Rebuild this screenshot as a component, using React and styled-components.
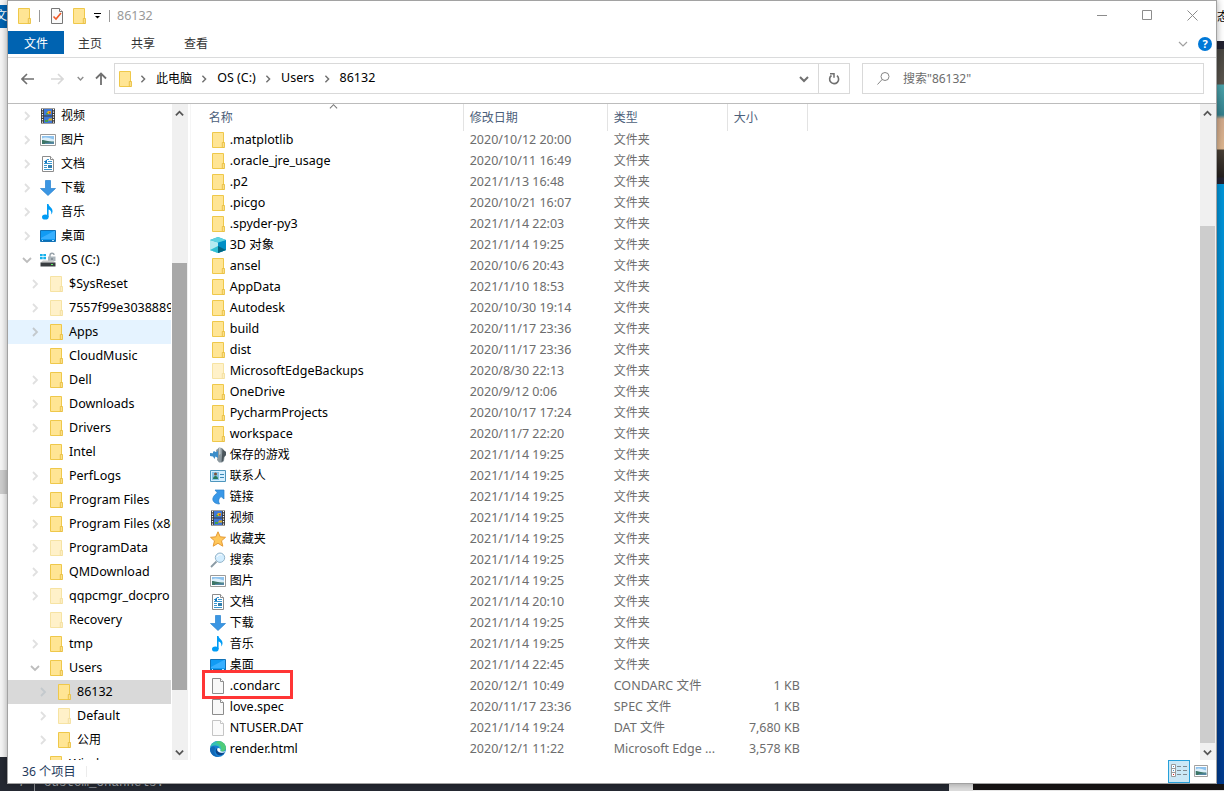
import React from "react";
import styled, { createGlobalStyle, css } from "styled-components";

const tree = [
    { name: "视频", icon: "video", level: 0, arrow: "right" },
    { name: "图片", icon: "picture", level: 0, arrow: "right" },
    { name: "文档", icon: "document", level: 0, arrow: "right" },
    { name: "下载", icon: "download", level: 0, arrow: "right" },
    { name: "音乐", icon: "music", level: 0, arrow: "right" },
    { name: "桌面", icon: "desktop", level: 0, arrow: "right" },
    { name: "OS (C:)", icon: "drive", level: 0, arrow: "down" },
    { name: "$SysReset", icon: "faded", level: 1, arrow: "right" },
    { name: "7557f99e3038889", icon: "faded", level: 1, arrow: "right" },
    { name: "Apps", icon: "folder", level: 1, arrow: "right", state: "hover" },
    { name: "CloudMusic", icon: "folder", level: 1 },
    { name: "Dell", icon: "folder", level: 1, arrow: "right" },
    { name: "Downloads", icon: "folder", level: 1, arrow: "right" },
    { name: "Drivers", icon: "folder", level: 1, arrow: "right" },
    { name: "Intel", icon: "folder", level: 1 },
    { name: "PerfLogs", icon: "folder", level: 1, arrow: "right" },
    { name: "Program Files", icon: "folder", level: 1, arrow: "right" },
    { name: "Program Files (x86)", icon: "folder", level: 1, arrow: "right" },
    { name: "ProgramData", icon: "faded", level: 1, arrow: "right" },
    { name: "QMDownload", icon: "folder", level: 1, arrow: "right" },
    { name: "qqpcmgr_docpro", icon: "faded", level: 1, arrow: "right" },
    { name: "Recovery", icon: "faded", level: 1 },
    { name: "tmp", icon: "folder", level: 1, arrow: "right" },
    { name: "Users", icon: "folder", level: 1, arrow: "down" },
    { name: "86132", icon: "folder", level: 2, arrow: "right", state: "selected" },
    { name: "Default", icon: "faded", level: 2, arrow: "right" },
    { name: "公用", icon: "folder", level: 2, arrow: "right" },
    { name: "Windows", icon: "folder", level: 1 },
];

const files = [
    [".matplotlib", "folder", "2020/10/12 20:00"],
    [".oracle_jre_usage", "folder", "2020/10/11 16:49"],
    [".p2", "folder", "2021/1/13 16:48"],
    [".picgo", "folder", "2020/10/21 16:07"],
    [".spyder-py3", "folder", "2021/1/14 22:03"],
    ["3D 对象", "cube", "2021/1/14 19:25"],
    ["ansel", "folder", "2020/10/6 20:43"],
    ["AppData", "folder", "2021/1/10 18:53"],
    ["Autodesk", "folder", "2020/10/30 19:14"],
    ["build", "folder", "2020/11/17 23:36"],
    ["dist", "folder", "2020/11/17 23:36"],
    ["MicrosoftEdgeBackups", "faded", "2020/8/30 22:13"],
    ["OneDrive", "folder", "2020/9/12 0:06"],
    ["PycharmProjects", "folder", "2020/10/17 17:24"],
    ["workspace", "folder", "2020/11/7 22:20"],
    ["保存的游戏", "games", "2021/1/14 19:25"],
    ["联系人", "contacts", "2021/1/14 19:25"],
    ["链接", "link", "2021/1/14 19:25"],
    ["视频", "video", "2021/1/14 19:25"],
    ["收藏夹", "star", "2021/1/14 19:25"],
    ["搜索", "search", "2021/1/14 19:25"],
    ["图片", "picture", "2021/1/14 19:25"],
    ["文档", "document", "2021/1/14 20:10"],
    ["下载", "download", "2021/1/14 19:25"],
    ["音乐", "music", "2021/1/14 19:25"],
    ["桌面", "desktop", "2021/1/14 22:45"],
    [".condarc", "file", "2020/12/1 10:49", "CONDARC 文件", "1 KB"],
    ["love.spec", "file", "2020/11/17 23:36", "SPEC 文件", "1 KB"],
    ["NTUSER.DAT", "fadedFile", "2021/1/14 19:24", "DAT 文件", "7,680 KB"],
    ["render.html", "edge", "2020/12/1 11:22", "Microsoft Edge ...", "3,578 KB"],
];

const FolderShape = () => (
    <>
        <path d="M2.5 .5h11v10h.7v5H2.5z" fill="#ffe594" stroke="#efc84a" />
        <path d="M12.300 15.500V10.500h2v5z" fill="#ffe79a" stroke="#e8bd3f" strokeWidth=".9" />
    </>
);

const FileShape = () => (
    <>
        <path d="M2.5.5h8l3 3v12h-11z" fill="#f8f8f8" stroke="#8c8c8c" />
        <path d="M10.5.5v3h3" fill="#fff" stroke="#8c8c8c" />
    </>
);

const shapes = {
    folder: <FolderShape />,
    faded: <g opacity=".5"><FolderShape /></g>,
    file: <FileShape />,
    fadedFile: <g opacity=".5"><FileShape /></g>,
    video: (
        <>
            <path d="M1 .5h14v15H1z" fill="#3b3b3b" />
            <path d="M4 1h8v6.5H4z" fill="#3f78d8" />
            <path d="M4 8.5h8V15H4z" fill="#3f78d8" />
            <path d="M8 3h3v3H6z M9 10.5h3v2H8z" fill="#e0b020" />
            <path d="M6 5h2v1.500H6z M5 12h3v2H5z" fill="#46a04b" />
            <path d="M9 4h1.500v1.500H9z" fill="#c94030" />
            <path d="M2.500 1v14M13.500 1v14" stroke="#fff" strokeWidth="1.200" strokeDasharray="1.200 1.300" />
        </>
    ),
    picture: (
        <>
            <path d="M.5 2.500h15v11H.5z" fill="#fff" stroke="#9a9a9a" />
            <path d="M2 4h12v8H2z" fill="#8fc3ee" />
            <path d="M2 6.500c3-2 6-1 12 1V10H2z" fill="#dceffa" />
            <path d="M2 8c3 0 5 1.500 12 1.500V12H2z" fill="#3d7668" />
            <path d="M5 11l9-1v2H5z" fill="#5588a4" />
        </>
    ),
    document: (
        <>
            <path d="M2.500.5h8l3 3v12h-11z" fill="#fff" stroke="#8c8c8c" />
            <path d="M10.500.5v3h3" fill="#fff" stroke="#8c8c8c" />
            <path d="M7 3.500h2M4 5.500h2M8 5.500h4M4 7.500h8M4 9.500h3M4 11.500h3M4 13.500h8" stroke="#3c97cf" />
            <path d="M5 5l2-1.500V7H5z" fill="#1679bc" />
            <path d="M8 9h4v3H8z" fill="#337fae" />
        </>
    ),
    download: <path d="M5.500.5h5v8h5L8 15.500.5 8.500h5z" fill="#3b96e3" stroke="#2682d0" strokeWidth=".7" />,
    music: (
        <>
            <ellipse cx="5.300" cy="13" rx="3.300" ry="2.600" fill="#009cf5" />
            <path d="M7 0h1.500c.3 3 4 3.500 4 7 0 1.500-.5 2.500-1.200 3.500.5-3-1-4.500-2.700-5V13H7z" fill="#009cf5" />
        </>
    ),
    desktop: (
        <>
            <path d="M.5 2.500h15v11H.5z" fill="#109bf4" stroke="#1272b6" />
            <path d="M1 10L14 3h1v8H1z" fill="#38b0ff" />
            <path d="M1 12.500h14" stroke="#0870b8" />
            <path d="M2 12.500h1M12 12.500h2" stroke="#b8e3ff" />
        </>
    ),
    drive: (
        <>
            <path d="M0 2h2.700v2.200H0zM3.300 2H6v2.200H3.300zM0 5h2.700v2.200H0zM3.300 5H6v2.200H3.300z" fill="#16b1ec" />
            <path d="M10 5V3.500c0-3 4-3 4-.5" fill="none" stroke="#9aa4ab" strokeWidth="1.400" />
            <path d="M8 4.500h7.500V9H8z" fill="#aab4bb" />
            <path d="M11.500 6h1v2h-1z" fill="#647078" />
            <path d="M3 8.500h10l2.500 2H.5z" fill="#c9c9c9" />
            <path d="M.5 10.500h15v4H.5z" fill="#393d40" />
            <path d="M11 12h2v1h-2z" fill="#5df260" />
        </>
    ),
    cube: (
        <>
            <path d="M0 3l8-3 8 3v10l-8 3-8-3z" fill="#1fb2d2" />
            <path d="M0 3l8 2.500V16l-8-3z" fill="#b4eaf0" />
            <path d="M8 5.500L16 3v10l-8 3z" fill="#008fc5" />
            <path d="M0 3l8-3 8 3-8 2.500z" fill="#5ed2e1" />
            <path d="M0 13l8-4v7z" fill="#31bfd3" />
            <path d="M8 9l8 4-8 3z" fill="#036581" />
        </>
    ),
    games: (
        <>
            <path d="M6 3l1.500-1L9 .5l3 .5 1.500 2L16 5v3l-1.500 2-.5 4-2 1.500h-3L7 13l.5-3z" fill="#8b989f" />
            <path d="M12.500 1.500L14 3.500 16 5v3l-2 2-1 4-1.500 1z" fill="#4b565c" />
            <path d="M9 1h1.500v6L9 8z" fill="#c2c9cd" />
            <path d="M0 6l3 .3V5l1-1 1.500 1L8 4v7l-2.500-1.500L4.500 12 3 9.500 0 9z" fill="#3c8dc9" />
        </>
    ),
    contacts: (
        <>
            <path d="M.5 2.500h15v11H.5z" fill="#d5efff" stroke="#4e96bd" />
            <path d="M2 4h7v8H2z" fill="#86c3e7" />
            <circle cx="5.500" cy="6" r="1.500" fill="#7c5036" />
            <path d="M3 11c0-4 5-4 5 0z" fill="#26785a" />
            <path d="M10 6.500h4M10 9.500h4" stroke="#3b89b7" />
        </>
    ),
    link: <path d="M5 1h9v9l-3-2.500C8.500 9.500 8 12 9.500 15 5 15 2 12 3 9c.6-2.200 2-3.500 4.500-5z" fill="#3998e8" stroke="#2680ca" strokeWidth=".7" />,
    star: <path d="M8 .8l2.200 5 5.300.5-4 3.500 1.300 5.400L8 12.300l-4.800 2.900 1.300-5.400-4-3.500 5.300-.5z" fill="#ffc75a" stroke="#e59a35" />,
    search: (
        <>
            <path d="M1 15l5.500-5.500" stroke="#8b9aa4" strokeWidth="1.800" />
            <circle cx="10" cy="5.700" r="4.700" fill="#d2edff" stroke="#93b4c9" />
            <path d="M7 5c.5-2 3-3 5-2" stroke="#fff" fill="none" />
        </>
    ),
    edge: (
        <>
            <circle cx="8" cy="8" r="8" fill="#1680d4" />
            <path d="M.3 6C2-1.500 14-2 15.700 6c.8 4-4 5.500-6.500 4 2.500-5-4-7-8.900-4z" fill="#35c1b4" />
            <path d="M8 0c5 0 8 3.500 8 7 0 3-3 4-5 3.600 1-2 1-7-5-9z" fill="#5bd05e" opacity=".7" />
            <path d="M5.500 7C3 10 5 15.500 9.500 15.900 4 16.500 0 13 0 8c1-3 4-3.500 5.500-1z" fill="#1268b5" />
            <path d="M7.500 7c-1.500 3 2.500 6.500 7 4.500-2 4-8 3.500-8.800-.8C5.400 9 6.200 7.500 7.500 7z" fill="#0b4489" />
            <path d="M7.800 7c-1.800 2.300.8 4.900 4.300 4.700 2.200-.1 3.200-.8 3.700-1.500-2.500.8-5.100.6-5.600-.4.800-1 0-2.900-2.400-2.800z" fill="#fff" />
        </>
    ),
};

const Icon = ({ name }) => (
    <Glyph width="16" height="16" viewBox="0 0 16 16">{shapes[name]}</Glyph>
);

const turns = { right: "M2 0l4 4-4 4", down: "M0 2l4 4 4-4", up: "M0 6l4-4 4 4" };

const Chevron = ({ dir, color, size = 8, weight = 1.5 }) => (
    <Glyph width={size} height={size} viewBox="-1 -1 10 10">
        <path d={turns[dir]} fill="none" stroke={color} strokeWidth={weight} />
    </Glyph>
);

const Label = ({ children }) => (
    <Text $cjk={/^[\u4e00-\u9fff]+$/.test(children)}>{children}</Text>
);

const TitleBar = () => (
    <Title>
        <Icon name="folder" />
        <Divider $left={7} $right={9} />
        <Glyph width="16" height="16" viewBox="0 0 16 16">
            <path d="M2.500.5h8l3 3v12h-11z" fill="#fafafa" stroke="#777" />
            <path d="M10.500.5v3h3" fill="#fff" stroke="#777" />
            <path d="M4.500 8.500l2.500 2.500 5-6" fill="none" stroke="#f05a28" strokeWidth="1.600" />
        </Glyph>
        <QuickFolder><Icon name="folder" /></QuickFolder>
        <Glyph width="8" height="6" viewBox="0 0 8 6">
            <path d="M0 .5h7" stroke="#000" />
            <path d="M1 3h5L3.500 5.500z" fill="#000" />
        </Glyph>
        <Divider $left={7} $right={7} />
        <Label>86132</Label>
        <Controls>
            <Glyph width="11" height="11" viewBox="0 0 11 11"><path d="M0 5.500h10" stroke="#8c8c8c" /></Glyph>
            <Glyph width="11" height="11" viewBox="0 0 11 11"><path d="M.5.5h9v9h-9z" fill="none" stroke="#8c8c8c" /></Glyph>
            <Glyph width="11" height="11" viewBox="0 0 11 11"><path d="M.5.5l10 10M10.500.5l-10 10" stroke="#8c8c8c" /></Glyph>
        </Controls>
    </Title>
);

const Ribbon = () => (
    <Tabs>
        <FileTab>文件</FileTab>
        <Tab>主页</Tab>
        <Tab>共享</Tab>
        <Tab>查看</Tab>
        <RibbonEnd>
            <Chevron dir="down" color="#a0a0a0" size={10} weight={1.2} />
            <Help>?</Help>
        </RibbonEnd>
    </Tabs>
);

const Navigation = () => (
    <NavBar>
        <NavButtons>
            <Glyph width="13" height="12" viewBox="0 0 13 12">
                <path d="M6 1L1 6l5 5M1 6h12" fill="none" stroke="#707070" strokeWidth="1.600" />
            </Glyph>
            <Glyph width="13" height="12" viewBox="0 0 13 12">
                <path d="M7 1l5 5-5 5M12 6H0" fill="none" stroke="#d8d8d8" strokeWidth="1.600" />
            </Glyph>
            <Chevron dir="down" color="#8c8c8c" size={7} weight={2} />
            <Glyph width="12" height="13" viewBox="0 0 12 13">
                <path d="M1 6.500l5-5 5 5M6 1.500V13" fill="none" stroke="#707070" strokeWidth="1.800" />
            </Glyph>
        </NavButtons>
        <AddressBox>
            <Icon name="folder" />
            {["此电脑", "OS (C:)", "Users", "86132"].map((crumb) => (
                <Crumb key={crumb}>
                    <Chevron dir="right" color="#707070" size={8} weight={1.8} />
                    <Label>{crumb}</Label>
                </Crumb>
            ))}
            <AddressEnd>
                <Chevron dir="down" color="#707070" size={10} weight={2} />
            </AddressEnd>
            <Refresh>
                <Glyph width="12" height="12" viewBox="0 0 12 12">
                    <path d="M9 2.700A4.500 4.500 0 1 1 3.500 2.500" fill="none" stroke="#707070" strokeWidth="1.600" />
                    <path d="M2 .8h4v4" fill="none" stroke="#707070" strokeWidth="1.500" />
                </Glyph>
            </Refresh>
        </AddressBox>
        <SearchBox>
            <Glyph width="13" height="13" viewBox="0 0 13 13">
                <circle cx="8" cy="4.500" r="4" fill="none" stroke="#858585" />
                <path d="M5.200 7.400L.5 12.500" stroke="#858585" />
            </Glyph>
            <Label>搜索"86132"</Label>
        </SearchBox>
    </NavBar>
);

const Scrollbar = ({ before, thumb, color }) => (
    <Track>
        <ScrollArrow><Chevron dir="up" color="#555" size={9} weight={2} /></ScrollArrow>
        <Thumb $before={before} $height={thumb} $color={color} />
        <ScrollArrow $end><Chevron dir="down" color="#555" size={9} weight={2} /></ScrollArrow>
    </Track>
);

const App = () => {
    return (
        <Desktop>
            <GlobalStyle />
            <LeftEdge>
                <EdgeTab>文</EdgeTab>
                <EdgeThumb />
                <EdgeDark />
            </LeftEdge>
            <Window>
                <TitleBar />
                <Ribbon />
                <Navigation />
                <Content>
                    <TreePane>
                        {tree.map((item) => (
                            <TreeRow key={item.name} $level={item.level} $state={item.state}>
                                <ArrowSlot>
                                    {item.arrow && (
                                        <Chevron
                                            dir={item.arrow}
                                            color={item.arrow === "down" ? "#bdbdbd" : item.state ? "#c3c9cd" : "#e0e0e0"}
                                            size={10}
                                            weight={1.8}
                                        />
                                    )}
                                </ArrowSlot>
                                <Icon name={item.icon} />
                                <Label>{item.name}</Label>
                            </TreeRow>
                        ))}
                    </TreePane>
                    <Scrollbar before={143} thumb={427} color="#a8a8a8" />
                    <FilePane>
                        <Columns as="header">
                            <HeadCell>
                                名称
                                <SortMark><Chevron dir="up" color="#777" size={9} weight={1.2} /></SortMark>
                            </HeadCell>
                            <HeadCell>修改日期</HeadCell>
                            <HeadCell>类型</HeadCell>
                            <HeadCell>大小</HeadCell>
                        </Columns>
                        {files.map(([name, icon, date, type = "文件夹", size]) => (
                            <FileRow key={name}>
                                <NameCell>
                                    <Icon name={icon} />
                                    <Label>{name}</Label>
                                </NameCell>
                                <Cell><Label>{date}</Label></Cell>
                                <Cell><Label>{type}</Label></Cell>
                                <Cell $right>{size && <Label>{size}</Label>}</Cell>
                                {name === ".condarc" && <Highlight />}
                            </FileRow>
                        ))}
                    </FilePane>
                    <Scrollbar before={106} thumb={517} color="#cdcdcd" />
                </Content>
                <StatusBar>
                    <Label>36 个项目</Label>
                    <StatusLine />
                    <ViewButtons>
                        <DetailsView>
                            <Glyph width="17" height="14" viewBox="0 0 17 14">
                                <path d="M.5.5h4v12h-4zM.5 4.500h4M.5 8.500h4" fill="#fff" stroke="#999" />
                                <path d="M6 2.500h4M12 2.500h4M6 6.500h4M12 6.500h4M6 10.500h4M12 10.500h4" stroke="#808a90" />
                                <path d="M2 2h1v1H2zM2 6h1v1H2z" fill="#4b94c6" />
                                <path d="M2 10h1v1H2z" fill="#d22" />
                            </Glyph>
                        </DetailsView>
                        <Glyph width="14" height="12" viewBox="0 2 16 12" preserveAspectRatio="none">{shapes.picture}</Glyph>
                    </ViewButtons>
                </StatusBar>
            </Window>
            <RightEdge>
                <EdgePaper>态</EdgePaper>
                <EdgePhoto />
            </RightEdge>
            <BottomEdge>
                <Editor><Gutter>7</Gutter><Code>custom_channels:</Code></Editor>
                <Gap />
                <Black />
            </BottomEdge>
        </Desktop>
    );
};

export default App;

const GlobalStyle = createGlobalStyle`
    * {
        box-sizing: border-box;
    }

    body {
        margin: 0;
        overflow: hidden;
    }
`;

const Desktop = styled.div`
    display: grid;
    grid-template-columns: 7px 1210px 7px;
    grid-template-rows: 784px 7px;
    width: 1224px;
    height: 791px;
    overflow: hidden;
    font-family: "Noto Sans", "Noto Sans CJK SC", sans-serif;
    font-size: 12px;
    color: #000;
`;

const Glyph = styled.svg`
    display: block;
    flex: none;
`;

const Text = styled.span`
    font-size: ${({ $cjk }) => ($cjk ? "12px" : "12.5px")};
    white-space: nowrap;
`;

const Window = styled.main`
    display: flex;
    flex-direction: column;
    position: relative;
    z-index: 1;
    background: #fff;
    border: 1px solid #a2a2a2;
    box-shadow: 0 0 7px rgba(0, 0, 0, 0.35);
`;

const Title = styled.div`
    display: flex;
    align-items: center;
    height: 30px;
    padding: 0 0 1px 8px;
    color: #999;
`;

const Divider = styled.div`
    width: 1px;
    height: 12px;
    margin: 0 ${({ $right }) => $right}px 0 ${({ $left }) => $left}px;
    background: #999;
`;

const QuickFolder = styled.div`
    margin: 0 7px 0 6px;
`;

const Controls = styled.div`
    display: flex;
    gap: 34px;
    margin-left: auto;
    padding-right: 18px;
`;

const Tabs = styled.nav`
    display: flex;
    height: 27px;
    border-bottom: 1px solid #dadbdc;
`;

const Tab = styled.div`
    width: 53px;
    height: 23px;
    padding-right: 1px;
    line-height: 25px;
    text-align: center;
    color: #333;
`;

const FileTab = styled(Tab)`
    width: 56px;
    padding-right: 0;
    background: #0063b1;
    color: #fff;
`;

const RibbonEnd = styled.div`
    display: flex;
    align-items: center;
    gap: 10px;
    margin-left: auto;
    padding-right: 4px;
`;

const Help = styled.div`
    width: 14px;
    height: 14px;
    border-radius: 50%;
    background: #0078d7;
    color: #fff;
    font-size: 11px;
    font-weight: 700;
    line-height: 14px;
    text-align: center;
`;

const NavBar = styled.div`
    display: flex;
    height: 46px;
    padding: 5px 12px 10px 13px;
    border-bottom: 1px solid #bcbcbc;
`;

const NavButtons = styled.div`
    display: flex;
    align-items: center;
    width: 93px;
    padding-top: 1px;

    svg:nth-child(2) {
        margin: 0 13px 0 17px;
    }

    svg:nth-child(4) {
        margin-left: 11px;
    }
`;

const AddressBox = styled.div`
    display: flex;
    align-items: center;
    width: 736px;
    height: 31px;
    padding-left: 2px;
    border: 1px solid #d9d9d9;
`;

const Crumb = styled.div`
    display: flex;
    align-items: center;
    gap: 9px;
    margin-right: 8.2px;

    svg + & {
        margin-left: 6px;
    }

    ${Text} {
        padding-bottom: 2px;
    }
`;

const AddressEnd = styled.div`
    margin-left: auto;
    padding-right: 9px;
`;

const Refresh = styled.div`
    display: flex;
    align-items: center;
    justify-content: center;
    width: 31px;
    height: 29px;
    border-left: 1px solid #d9d9d9;
`;

const SearchBox = styled.div`
    display: flex;
    align-items: center;
    gap: 13px;
    width: 342px;
    height: 31px;
    margin-left: 12px;
    padding: 0 0 1px 14px;
    border: 1px solid #d9d9d9;
    color: #6d6d6d;

    ${Text} {
        font-size: 12px;
    }
`;

const Content = styled.div`
    display: flex;
    height: 656px;
`;

const TreePane = styled.aside`
    width: 164px;
    height: 656px;
    padding-right: 1px;
    overflow: hidden;
`;

const TreeRow = styled.div`
    display: flex;
    align-items: center;
    height: 24px;
    padding-left: ${({ $level }) => 11 + $level * 8}px;
    overflow: hidden;
    ${({ $state }) => $state === "hover" && css`background: #e5f3ff;`}
    ${({ $state }) => $state === "selected" && css`background: #d9d9d9;`}

    ${Text} {
        margin-left: 5px;
        padding-bottom: 2px;
    }
`;

const ArrowSlot = styled.div`
    display: flex;
    justify-content: center;
    flex: none;
    width: 15px;
    margin-right: 6px;
`;

const Track = styled.div`
    display: flex;
    flex-direction: column;
    flex: none;
    width: 16px;
    background: #f0f0f0;
`;

const ScrollArrow = styled.div`
    display: flex;
    align-items: center;
    justify-content: center;
    height: 17px;
    padding: 1px 1px 0 0;
    ${({ $end }) => $end && css`margin-top: auto;`}
`;

const Thumb = styled.div`
    width: 15px;
    height: ${({ $height }) => $height}px;
    margin-top: ${({ $before }) => $before - 1}px;
    background: ${({ $color }) => $color};
`;

const FilePane = styled.section`
    width: 1012px;
    margin-left: 2px;
    border-left: 1px solid #f5f5f5;
`;

const Columns = styled.div`
    display: grid;
    grid-template-columns: 273px 144px 120px 80px;
`;

const HeadCell = styled.div`
    height: 27px;
    margin-bottom: -2px;
    padding-left: 6px;
    border-right: 1px solid #e3e3e3;
    color: #4c607a;
    line-height: 27px;
    position: relative;

    &:first-child {
        padding-left: 18px;
    }
`;

const SortMark = styled.span`
    position: absolute;
    top: -2px;
    left: 138px;
`;

const FileRow = styled(Columns)`
    position: relative;
    height: 21px;
    padding-top: 1px;
    line-height: 20px;
    align-items: start;
`;

const NameCell = styled.div`
    display: flex;
    align-items: center;
    height: 20px;
    gap: 4px;
    padding-left: 19px;
`;

const Cell = styled.div`
    height: 20px;
    padding-left: 6px;
    color: #6d6d6d;

    ${Text} {
        font-size: ${({ $right }) => ($right ? "12.45px" : null)};
    }

    ${({ $right }) => $right && css`
        padding-right: 8px;
        text-align: right;
    `}
`;

const Highlight = styled.div`
    position: absolute;
    z-index: 1;
    top: -5px;
    left: 11px;
    width: 91px;
    height: 29px;
    border: 3px solid #ff3535;
`;

const StatusBar = styled.footer`
    display: flex;
    align-items: center;
    height: 23px;
    padding-left: 14px;
    color: #1e395b;

    ${Text} {
        font-size: 12.2px;
        padding-bottom: 1px;
    }
`;

const StatusLine = styled.div`
    width: 1px;
    height: 11px;
    margin-left: 10px;
    background: #ececec;
`;

const ViewButtons = styled.div`
    display: flex;
    align-items: center;
    gap: 4px;
    margin-left: auto;
    padding: 0 8px 1px 0;
`;

const DetailsView = styled.div`
    display: flex;
    align-items: center;
    justify-content: center;
    width: 22px;
    height: 23px;
    background: #cbe8f6;
    border: 1px solid #26a0da;
`;

const LeftEdge = styled.div`
    display: flex;
    flex-direction: column;
    padding-top: 5px;
    overflow: hidden;
    background: #f6f6f6;
`;

const EdgeTab = styled.div`
    display: flex;
    flex: none;
    justify-content: flex-end;
    height: 23px;
    background: #0063b1;
    color: #fff;
    line-height: 22px;
`;

const EdgeThumb = styled.div`
    height: 24px;
    margin-top: 442px;
    background: #cdcdcd;
`;

const EdgeDark = styled.div`
    height: 27px;
    margin-top: auto;
    background: #252932;
`;

const RightEdge = styled.div`
    overflow: hidden;
    background: linear-gradient(#0095d8 184px, #0083ce 380px, #0050a8 520px, #003a8c 784px);
`;

const EdgePaper = styled.div`
    height: 41px;
    background: #fff;
    line-height: 33px;
`;

const EdgePhoto = styled.div`
    height: 143px;
    background: linear-gradient(#222230 8px, #494742 8px, #5a554d 43px, #4ba3aa 44px, #347f8c 74px, #d0a88a 78px, #dcb58e 108px, #494036 109px, #25211f 136px, #242433 137px);
`;

const BottomEdge = styled.div`
    display: flex;
    grid-column: 1 / -1;
    overflow: hidden;
`;

const Editor = styled.div`
    display: flex;
    width: 949px;
    background: #252932;
    color: #a3a8ae;
    font-family: "Liberation Mono", monospace;
    font-size: 12.5px;
    line-height: 14px;
`;

const Gutter = styled.div`
    width: 35px;
    margin-top: -8px;
    padding-left: 18px;
    border-right: 1px solid #8b8e93;
`;

const Code = styled.div`
    margin: -8px 0 0 9px;
`;

const Gap = styled.div`
    width: 24px;
    background: #dedede;
`;

const Black = styled.div`
    flex: 1;
    background: #171414;
    border-bottom: 1px solid #e8e8e8;
`;
